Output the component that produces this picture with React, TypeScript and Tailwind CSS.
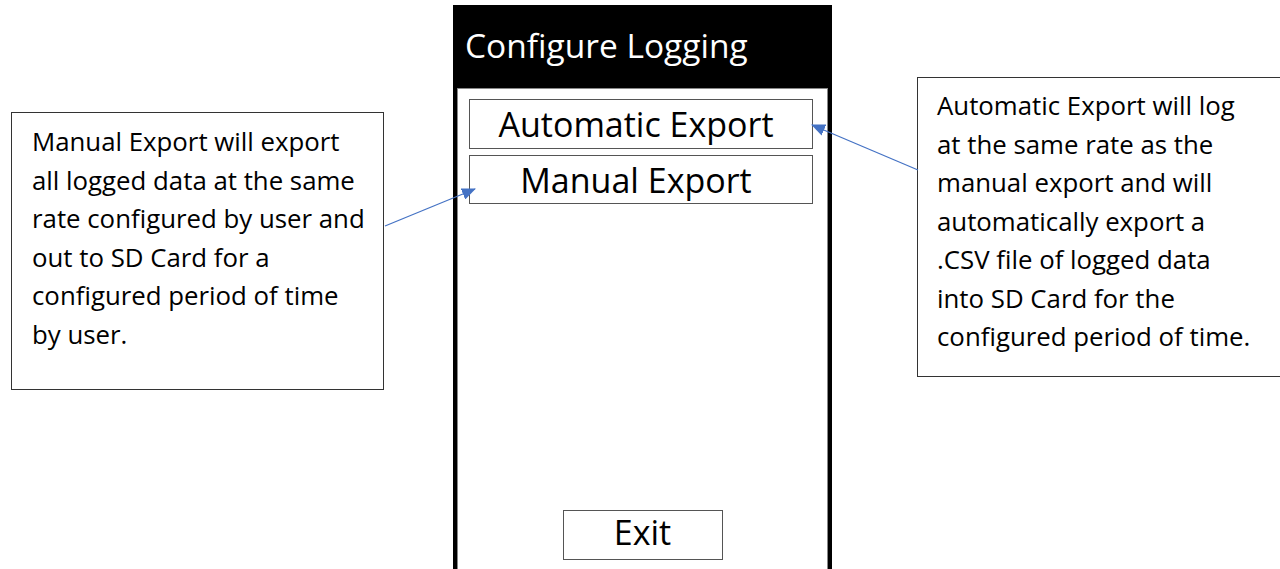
const leftNote = [
  'Manual Export will export',
  'all logged data at the same',
  'rate configured by user and',
  'out to SD Card for a',
  'configured period of time',
  'by user.',
]

const rightNote = [
  'Automatic Export will log',
  'at the same rate as the',
  'manual export and will',
  'automatically export a',
  '.CSV file of logged data',
  'into SD Card for the',
  'configured period of time.',
]

const font = { fontFamily: "'Open Sans', 'Liberation Sans', sans-serif" }

function Note({ lines, className }: { lines: string[]; className: string }) {
  return (
    <div className={`shrink-0 border border-[#333] bg-white text-black text-[25.8px] leading-[38.5px] ${className}`}>
      {lines.map((l) => (
        <div key={l} className="whitespace-nowrap">{l}</div>
      ))}
    </div>
  )
}

function Arrows() {
  return (
    <svg className="absolute inset-0 pointer-events-none" width="1280" height="569">
      <defs>
        <marker id="head" markerWidth="14" markerHeight="12" refX="13" refY="6" orient="auto" markerUnits="userSpaceOnUse">
          <path d="M0,0 L14,6 L0,12 Z" fill="#4472c4" />
        </marker>
      </defs>
      <line x1="385" y1="226" x2="475" y2="189" stroke="#4472c4" strokeWidth="1.2" markerEnd="url(#head)" />
      <line x1="918" y1="170" x2="812" y2="125" stroke="#4472c4" strokeWidth="1.2" markerEnd="url(#head)" />
    </svg>
  )
}

export default function App() {
  return (
    <div className="relative w-[1280px] h-[569px] overflow-hidden bg-white" style={font}>
      <div className="flex items-start">
        <Note lines={leftNote} className="ml-[11px] mt-[112px] w-[373px] h-[278px] pl-[20px] pt-[9px]" />

        <div className="shrink-0 ml-[69px] mt-[5px] w-[379px] h-[568px] bg-black flex flex-col px-[4px] pb-[3px]">
          <div className="h-[83px] text-white text-[33.5px] pl-[8px] pt-[20px] leading-[40px]">Configure Logging</div>
          <div className="flex-1 bg-white border border-[#888] flex flex-col">
            <button className="ml-[11px] mt-[10px] w-[344px] h-[50px] pr-[10px] border border-[#555] text-[34px] leading-none">
              Automatic Export
            </button>
            <button className="ml-[11px] mt-[6px] w-[344px] h-[49px] pr-[10px] border border-[#555] text-[34px] leading-none">
              Manual Export
            </button>
            <div className="flex-1" />
            <button className="self-center mb-[9px] w-[160px] h-[50px] pb-[6px] border border-[#555] text-[34px] leading-none">
              Exit
            </button>
          </div>
        </div>

        <Note lines={rightNote} className="ml-[85px] mt-[77px] w-[380px] h-[300px] pl-[19px] pt-[8px]" />
      </div>
      <Arrows />
    </div>
  )
}
